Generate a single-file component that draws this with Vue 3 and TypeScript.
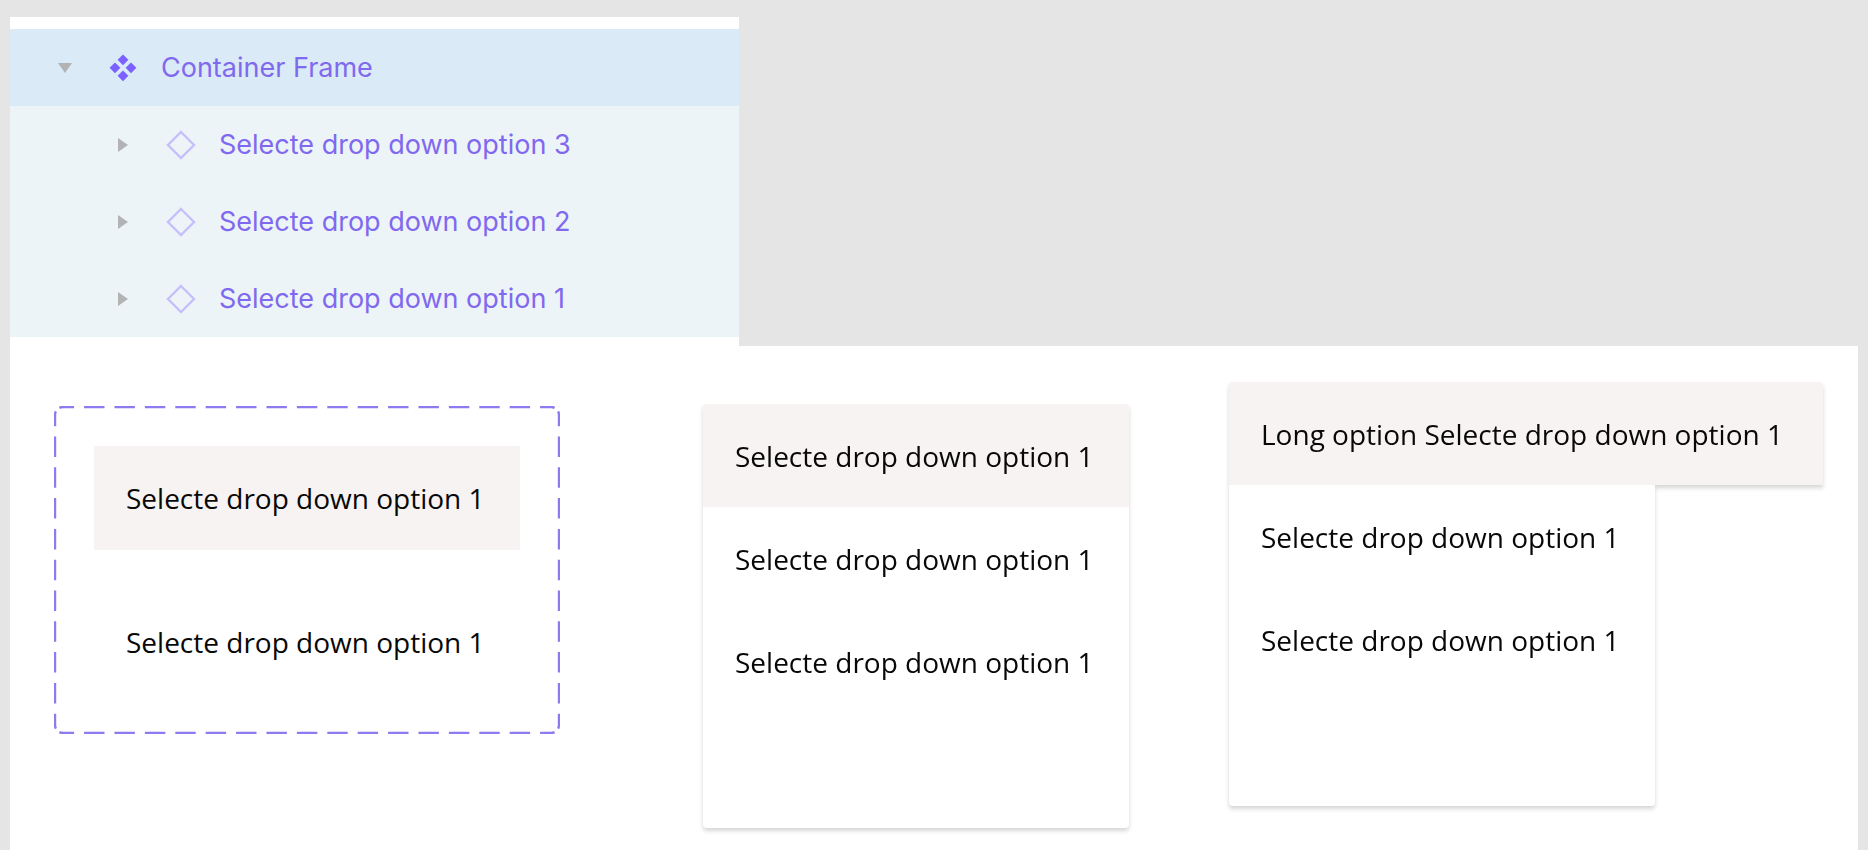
<script setup lang="ts">
import { ref } from 'vue'

interface Layer {
  id: number
  name: string
}

interface Menu {
  id: string
  label: string
  options: string[]
}

const layers: Layer[] = [
  { id: 3, name: 'Selecte drop down option 3' },
  { id: 2, name: 'Selecte drop down option 2' },
  { id: 1, name: 'Selecte drop down option 1' },
]

const option = 'Selecte drop down option 1'
const variants: string[] = [option, option]
const menus: Menu[] = [
  { id: 'regular', label: 'Menu', options: [option, option, option] },
  { id: 'long', label: 'Menu with a long option', options: [`Long option ${option}`, option, option] },
]

const open = ref(true)
</script>

<template>
  <div class="page">
    <nav class="layers" aria-label="Layers">
      <div class="layer layer-root">
        <button class="toggle" type="button" aria-label="Toggle Container Frame" :aria-expanded="open" @click="open = !open">
          <svg width="14" height="10" viewBox="0 0 14 10"><path d="M0 0H14L7 10Z" fill="#b1b3b4" /></svg>
        </button>
        <svg class="icon" viewBox="0 0 30 30">
          <path
            d="M15 1.4L20.4 6.8L15 12.2L9.6 6.8ZM15 17.4L20.4 22.8L15 28.2L9.6 22.8ZM7 9.4L12.4 14.8L7 20.2L1.6 14.8ZM23 9.4L28.4 14.8L23 20.2L17.6 14.8Z"
            fill="#7b61ff"
          />
        </svg>
        <span>Container Frame</span>
      </div>
      <template v-if="open">
        <div v-for="layer in layers" :key="layer.id" class="layer layer-child">
          <button class="toggle" type="button" :aria-label="`Expand ${layer.name}`">
            <svg width="10" height="14" viewBox="0 0 10 14"><path d="M0 0L10 7L0 14Z" fill="#b1b3b4" /></svg>
          </button>
          <svg class="icon" viewBox="0 0 30 30">
            <path d="M15 2L28 15L15 28L2 15Z" fill="none" stroke="#c5bffb" stroke-width="2.4" />
          </svg>
          <span>{{ layer.name }}</span>
        </div>
      </template>
    </nav>

    <main class="canvas">
      <section class="frame" aria-label="Option variants">
        <svg class="outline" viewBox="0 0 506 328" preserveAspectRatio="none" fill="none" stroke="#8e7aee" stroke-width="2.4">
          <g stroke-dasharray="20.4 10" stroke-dashoffset="5.6">
            <path d="M5.4 1.9A8 8 0 0 1 9 1H497A8 8 0 0 1 500.6 1.9" />
            <path d="M5.4 326.1A8 8 0 0 0 9 327H497A8 8 0 0 0 500.6 326.1" />
          </g>
          <g stroke-dasharray="20.5 10.3" stroke-dashoffset="5.6">
            <path d="M1.9 5.4A8 8 0 0 0 1 9V319A8 8 0 0 0 1.9 322.6" />
            <path d="M504.1 5.4A8 8 0 0 1 505 9V319A8 8 0 0 1 504.1 322.6" />
          </g>
        </svg>
        <ul class="variants" role="listbox" aria-label="Variants">
          <li
            v-for="(text, i) in variants"
            :key="i"
            class="option"
            :class="{ selected: i === 0 }"
            role="option"
            :aria-selected="i === 0"
          >{{ text }}</li>
        </ul>
      </section>

      <ul v-for="menu in menus" :key="menu.id" class="menu" :class="menu.id" role="listbox" :aria-label="menu.label">
        <li
          v-for="(text, i) in menu.options"
          :key="i"
          class="option"
          :class="{ selected: i === 0 }"
          role="option"
          :aria-selected="i === 0"
        >{{ text }}</li>
      </ul>
    </main>
  </div>
</template>

<style>
html,
body {
  margin: 0;
  background: #e5e5e5;
}
</style>

<style scoped>
.page {
  display: flex;
  flex-direction: column;
  box-sizing: border-box;
  min-height: 100vh;
  padding: 17px 10px 0;
  background: #e5e5e5;
}

.layers {
  box-sizing: border-box;
  width: 729px;
  padding: 12px 0 9px;
  background: #fff;
  color: #8069ee;
  font: 27px/32px Inter, "Liberation Sans", sans-serif;
}

.layer {
  display: flex;
  align-items: center;
  height: 77px;
}

.layer-root {
  padding-left: 40px;
  background: #daeaf7;
}

.layer-child {
  padding-left: 98px;
  background: #ecf4f8;
}

.toggle {
  display: flex;
  align-items: center;
  justify-content: center;
  width: 30px;
  height: 30px;
  margin-right: 28px;
  padding: 0;
  border: 0;
  background: none;
}

.icon {
  width: 30px;
  height: 30px;
  margin-right: 23px;
}

.canvas {
  display: flex;
  flex: 1;
  align-items: flex-start;
  padding: 36px 36px 16px 44px;
  background: #fff;
  color: #080808;
  font: 28px/44px "Open Sans", "Noto Sans", sans-serif;
}

.frame {
  position: relative;
  flex: none;
  margin-top: 24px;
  padding: 40px;
}

.outline {
  position: absolute;
  inset: 0;
  width: 100%;
  height: 100%;
}

.variants {
  display: flex;
  flex-direction: column;
  gap: 40px;
  margin: 0;
  padding: 0;
  list-style: none;
}

.option {
  box-sizing: border-box;
  min-width: 426px;
  padding: 30px 32px;
  white-space: nowrap;
}

.option.selected {
  background: #f7f3f2;
}

.menu {
  flex: none;
  box-sizing: border-box;
  width: 426px;
  height: 424px;
  margin: 0;
  padding: 0;
  border-radius: 4px;
  background: #fff;
  list-style: none;
  filter: drop-shadow(0 3px 2px rgba(0, 0, 0, 0.16));
}

.menu .option {
  padding-bottom: 29px;
}

.menu .selected {
  width: max-content;
  border-radius: 4px 4px 0 0;
}

.menu.regular {
  margin: 22px 100px 0 143px;
}

.menu.long .selected {
  min-width: 594px;
}
</style>
